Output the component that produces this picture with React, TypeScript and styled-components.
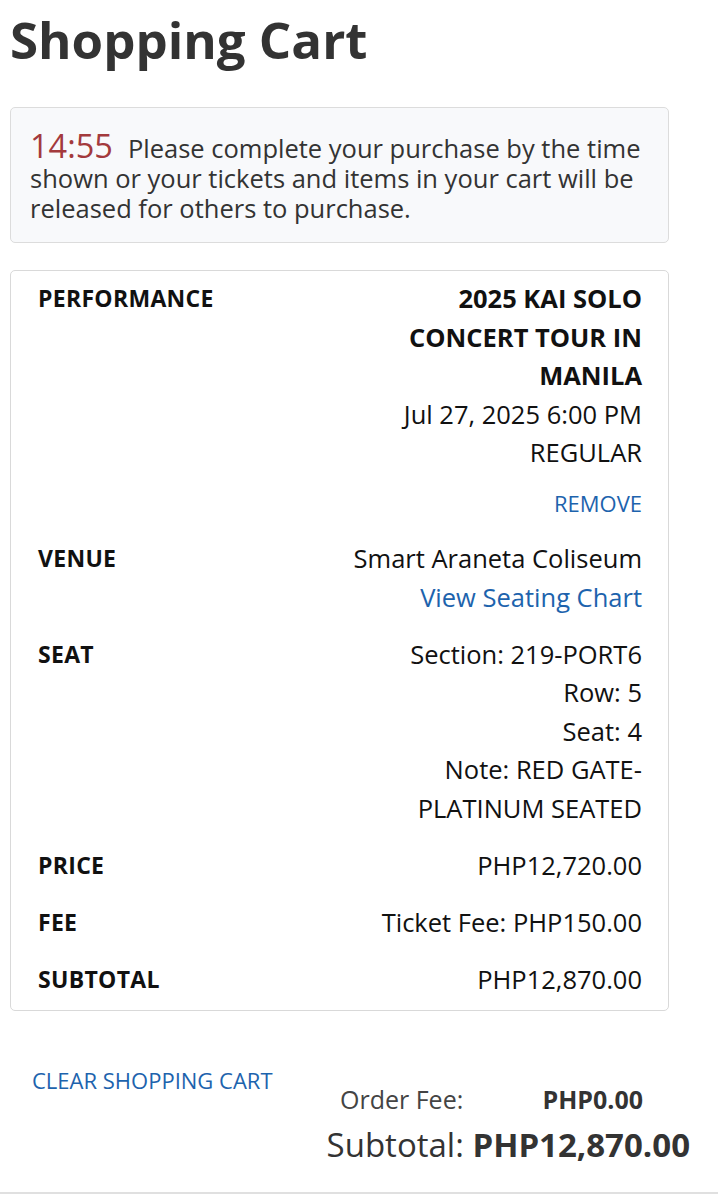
import React from "react";
import styled, { createGlobalStyle } from "styled-components";

const GlobalStyle = createGlobalStyle`
  html, body {
    margin: 0;
    padding: 0;
    background: #fff;
  }
  body {
    font-family: "Open Sans", "Noto Sans", sans-serif;
    color: #222;
  }
`;

type Row = {
  label: string;
  values: React.ReactNode[];
};

/* ------------ styled parts ------------ */

const Page = styled.div({
  display: "flex",
  flexDirection: "column",
});

const Main = styled.div({
  padding: "0 49px 0 10px",
  display: "flex",
  flexDirection: "column",
});

const Title = styled.h1({
  margin: 0,
  padding: "9px 0 0",
  fontSize: 51,
  fontWeight: 700,
  lineHeight: "60px",
  color: "#333",
});

const Alert = styled.div({
  marginTop: 38,
  background: "#f8f9fb",
  border: "1px solid #dcdcdc",
  borderRadius: 5,
  padding: "25px 10px 19px 19px",
  fontSize: 25.5,
  lineHeight: "30px",
  color: "#333",
});

const Timer = styled.span({
  color: "#a33a3d",
  fontSize: 32.5,
  lineHeight: "24px",
  marginRight: 15,
});

const Card = styled.div({
  marginTop: 27,
  border: "1px solid #d9d9d9",
  borderRadius: 5,
  padding: "8px 26px 12px 27px",
  display: "flex",
  flexDirection: "column",
  gap: 18.5,
});

const DetailRow = styled.div({
  display: "grid",
  gridTemplateColumns: "auto 1fr",
  columnGap: 20,
  fontSize: 25.5,
  lineHeight: "38.5px",
});

const Label = styled.div({
  fontWeight: 700,
  fontSize: 23,
  letterSpacing: 0.3,
  color: "#111",
});

const Values = styled.div({
  textAlign: "right",
  color: "#111",
  display: "flex",
  flexDirection: "column",
  alignItems: "flex-end",
});

const EventName = styled.div({
  fontWeight: 700,
  maxWidth: 245,
});

const Link = styled.a<{ $size?: number }>(({ $size }) => ({
  color: "#1d63ad",
  textDecoration: "none",
  fontSize: $size ?? 25.5,
  cursor: "pointer",
}));

const RemoveLink = styled(Link)({
  marginTop: 13,
  lineHeight: "36px",
});

const Footer = styled.div({
  marginTop: 54,
  padding: "0 28px 24px 32px",
  display: "flex",
  justifyContent: "space-between",
  alignItems: "flex-start",
  borderBottom: "2px solid #e0e0e0",
});

const ClearLink = styled(Link)({
  lineHeight: "30px",
});

const Summary = styled.div({
  display: "flex",
  flexDirection: "column",
  alignItems: "flex-end",
  paddingTop: 17,
  gap: 6,
});

const FeeRow = styled.div({
  display: "grid",
  gridTemplateColumns: "1fr auto",
  width: 303,
  marginRight: 47,
  fontSize: 25,
  lineHeight: "34px",
  color: "#444",
});

const FeeValue = styled.span({
  fontWeight: 700,
  color: "#333",
  textAlign: "right",
});

const SubtotalLine = styled.div({
  fontSize: 33,
  lineHeight: "46px",
  color: "#333",
});

const SubtotalValue = styled.span({
  fontWeight: 700,
});

/* ------------ data ------------ */

const rows: Row[] = [
  {
    label: "PERFORMANCE",
    values: [
      <EventName key="n">2025 KAI SOLO CONCERT TOUR IN MANILA</EventName>,
      <div key="d">Jul 27, 2025 6:00 PM</div>,
      <div key="t">REGULAR</div>,
      <RemoveLink key="r" $size={22}>REMOVE</RemoveLink>,
    ],
  },
  {
    label: "VENUE",
    values: [
      <div key="v">Smart Araneta Coliseum</div>,
      <Link key="c">View Seating Chart</Link>,
    ],
  },
  {
    label: "SEAT",
    values: [
      <div key="s">Section: 219-PORT6</div>,
      <div key="r">Row: 5</div>,
      <div key="st">Seat: 4</div>,
      <div key="n">Note: RED GATE-</div>,
      <div key="n2">PLATINUM SEATED</div>,
    ],
  },
  { label: "PRICE", values: [<div key="p">PHP12,720.00</div>] },
  { label: "FEE", values: [<div key="f">Ticket Fee: PHP150.00</div>] },
  { label: "SUBTOTAL", values: [<div key="s">PHP12,870.00</div>] },
];

const App: React.FC = () => {
  return (
    <Page>
      <GlobalStyle />
      <Main>
        <Title>Shopping Cart</Title>
        <Alert>
          <Timer>14:55</Timer>
          Please complete your purchase by the time shown or your tickets and
          items in your cart will be released for others to purchase.
        </Alert>
        <Card>
          {rows.map((r) => (
            <DetailRow key={r.label}>
              <Label>{r.label}</Label>
              <Values>{r.values}</Values>
            </DetailRow>
          ))}
        </Card>
      </Main>
      <Footer>
        <ClearLink $size={22}>CLEAR SHOPPING CART</ClearLink>
        <Summary>
          <FeeRow>
            <span>Order Fee:</span>
            <FeeValue>PHP0.00</FeeValue>
          </FeeRow>
          <SubtotalLine>
            Subtotal: <SubtotalValue>PHP12,870.00</SubtotalValue>
          </SubtotalLine>
        </Summary>
      </Footer>
    </Page>
  );
};

export default App;
